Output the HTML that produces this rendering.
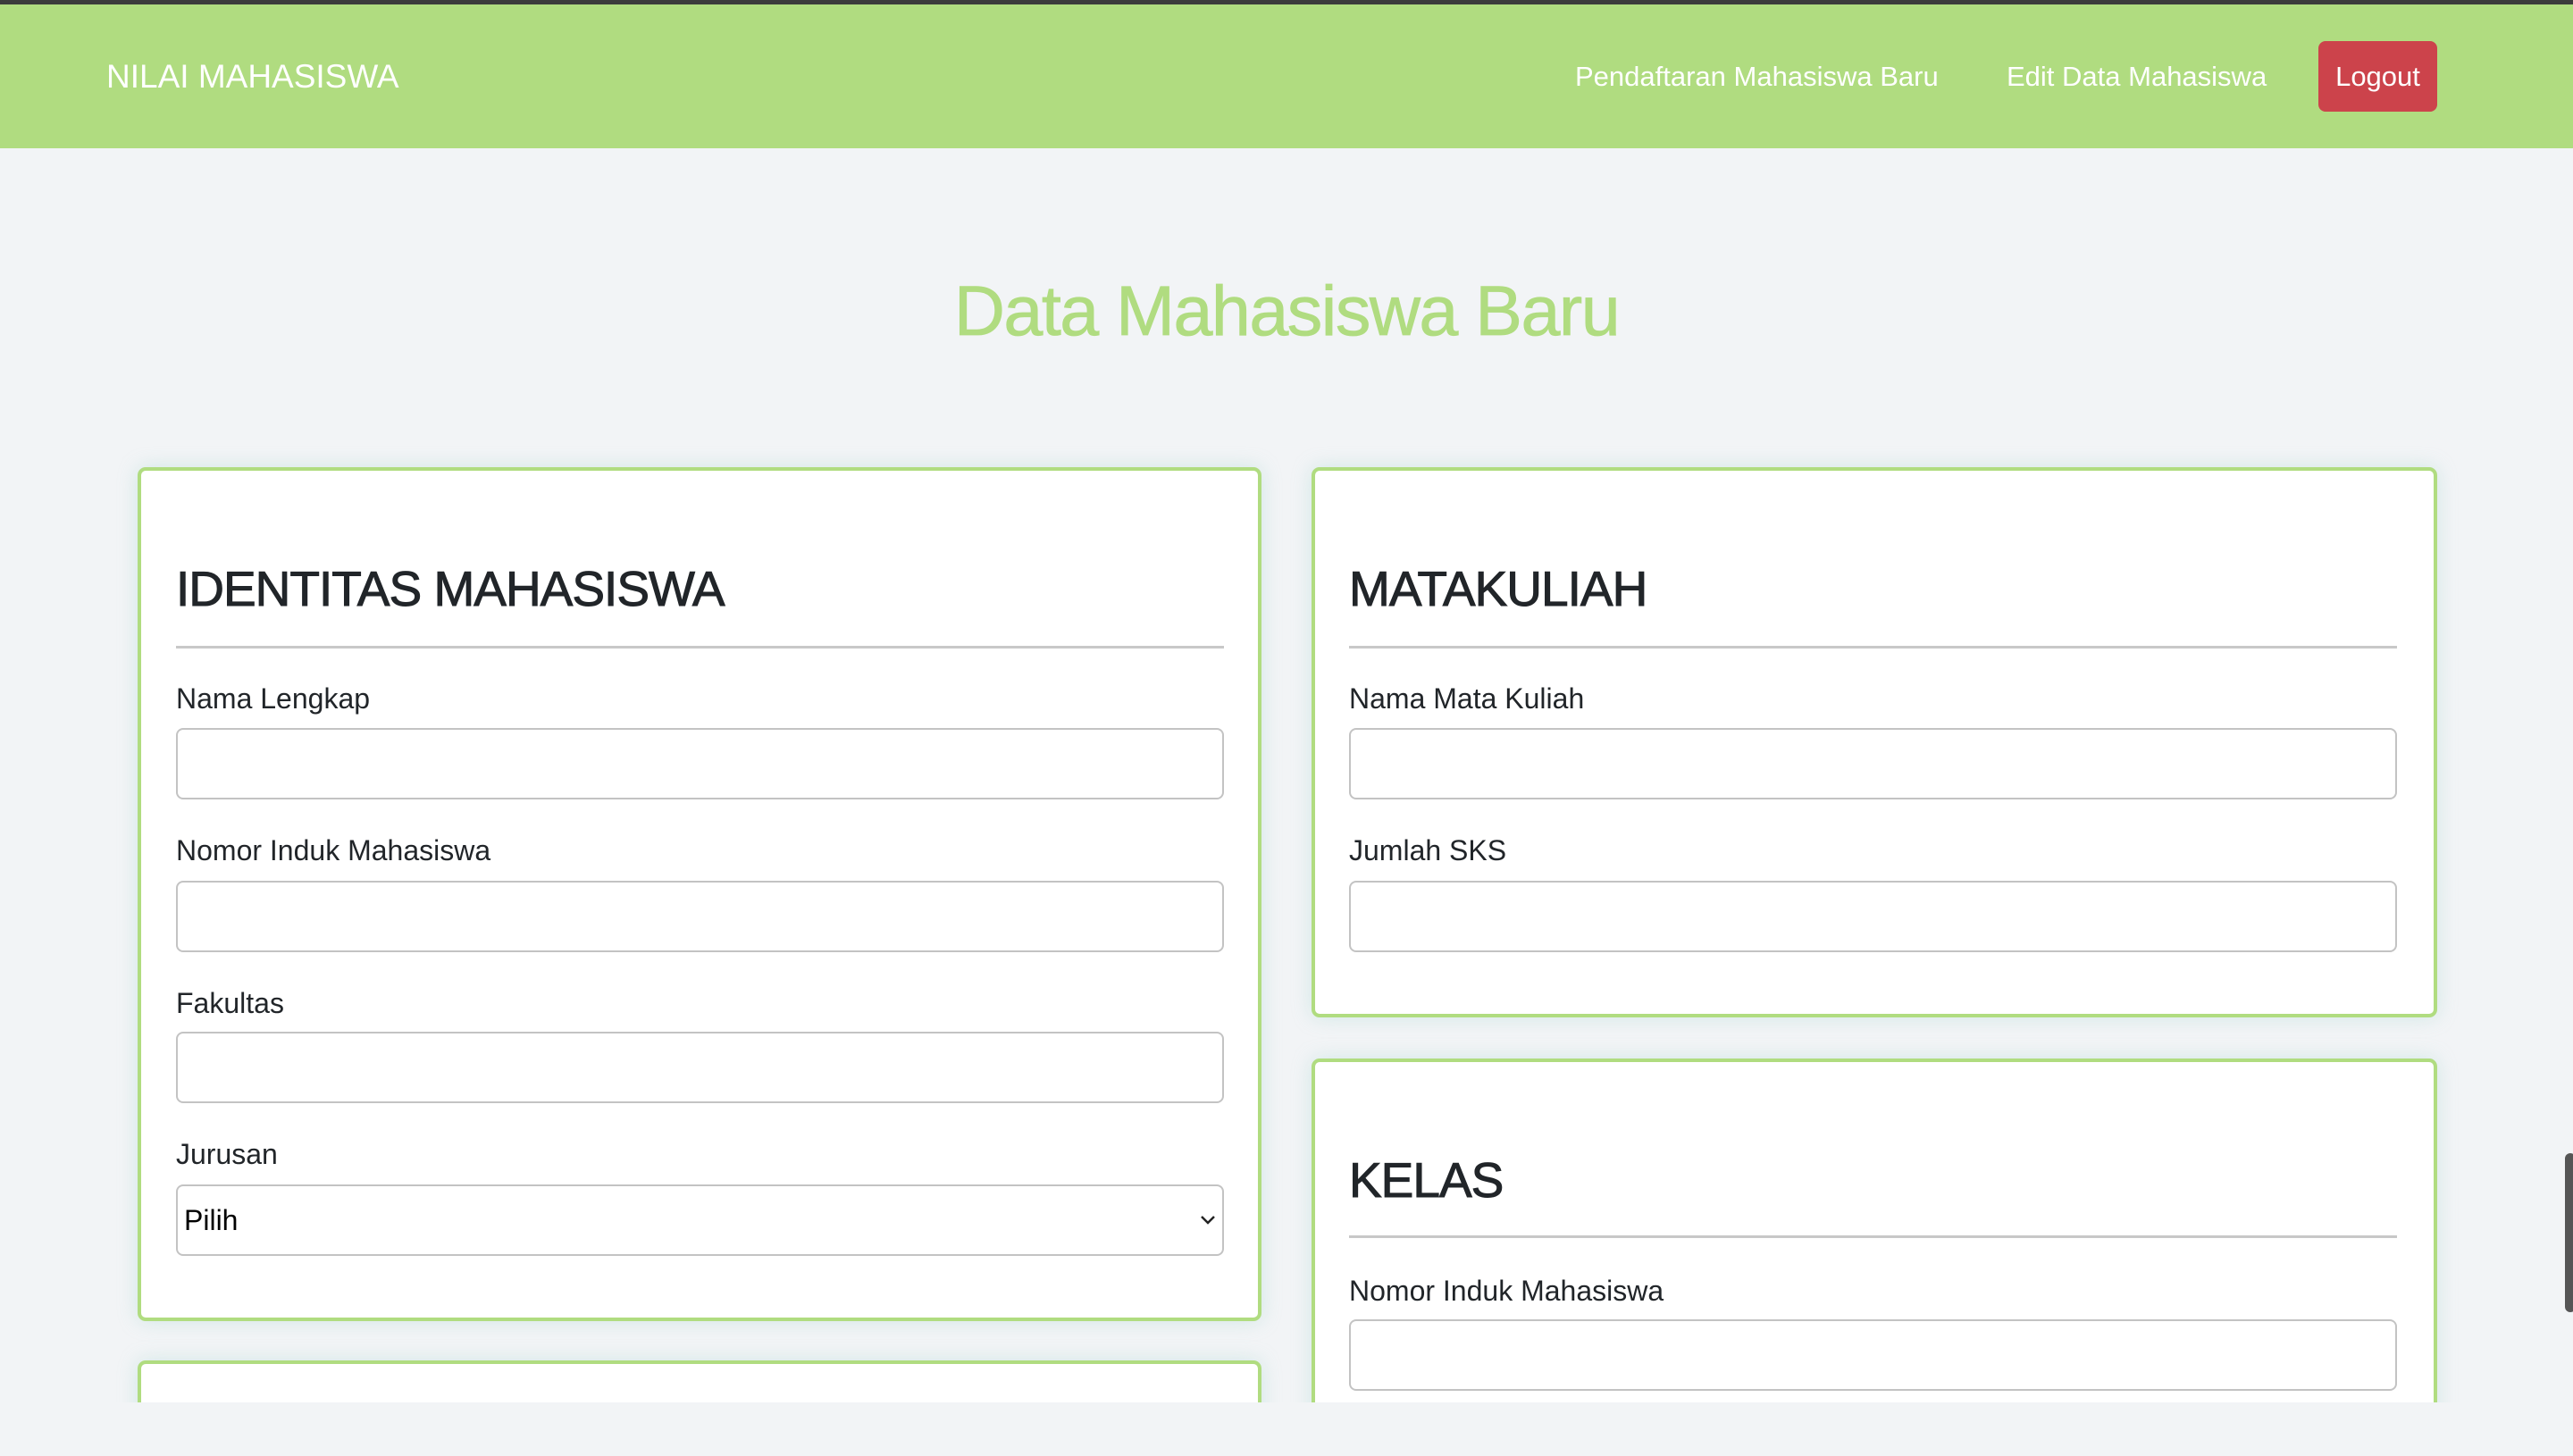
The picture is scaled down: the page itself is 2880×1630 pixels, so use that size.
<!DOCTYPE html>
<html><head><style>
*{box-sizing:border-box;margin:0;padding:0}
html,body{width:2880px;height:1630px;overflow:hidden}
body{background:#f2f4f6;font-family:"Liberation Sans",sans-serif;position:relative;color:#212529}
.a{position:absolute;white-space:nowrap}
.top{left:0;top:0;width:2880px;height:5px;background:#3c3c3c}
.nav{left:0;top:5px;width:2880px;height:161px;background:#b0dc80}
.nl{color:#fff;font-size:31px;top:68px}
.logout{left:2595px;top:46px;width:133px;height:79px;background:#cc434b;border-radius:8px;color:#fff;font-size:31px;line-height:79px;text-align:center}
.title{left:0;width:2880px;text-align:center;top:302px;font-size:79px;letter-spacing:-1.5px;color:#b0dc80;-webkit-text-stroke:0.8px #b0dc80}
.clip{left:0;top:0;width:2880px;height:1570px;overflow:hidden}
.card{position:absolute;background:#fff;border:4px solid #b0dc80;border-radius:9px;box-shadow:0 0 22px rgba(150,210,200,.35)}
.h{font-size:55px;color:#212529;letter-spacing:-1px;-webkit-text-stroke:1px #212529}
.hr{height:3px;background:#c8c8c8}
.lb{font-size:32px}
.in{border:2px solid #c3c3c3;border-radius:8px;height:80px;background:#fff}
.sb{left:2871px;top:1291px;width:12px;height:178px;background:#555;border-radius:6px}
</style></head><body>
<div class="a clip">
<div class="a top"></div>
<div class="a nav"></div>
<div class="a nl" style="left:119px;top:65px;font-size:37px">NILAI MAHASISWA</div>
<div class="a nl" style="left:1763px">Pendaftaran Mahasiswa Baru</div>
<div class="a nl" style="left:2246px">Edit Data Mahasiswa</div>
<div class="a logout">Logout</div>
<div class="a title">Data Mahasiswa Baru</div>

<div class="card" style="left:154px;top:523px;width:1258px;height:956px"></div>
<div class="card" style="left:1468px;top:523px;width:1260px;height:616px"></div>
<div class="card" style="left:1468px;top:1185px;width:1260px;height:600px"></div>
<div class="card" style="left:154px;top:1523px;width:1258px;height:300px"></div>

<div class="a h" style="left:197px;top:627px">IDENTITAS MAHASISWA</div>
<div class="a hr" style="left:197px;top:723px;width:1173px"></div>
<div class="a lb" style="left:197px;top:764px">Nama Lengkap</div>
<div class="a in" style="left:197px;top:815px;width:1173px"></div>
<div class="a lb" style="left:197px;top:934px">Nomor Induk Mahasiswa</div>
<div class="a in" style="left:197px;top:986px;width:1173px"></div>
<div class="a lb" style="left:197px;top:1105px">Fakultas</div>
<div class="a in" style="left:197px;top:1155px;width:1173px"></div>
<div class="a lb" style="left:197px;top:1274px">Jurusan</div>
<div class="a in" style="left:197px;top:1326px;width:1173px"></div>
<div class="a lb" style="left:206px;top:1348px;color:#000">Pilih</div>
<svg class="a" style="left:1343px;top:1358px" width="18" height="14" viewBox="0 0 18 14"><path d="M2 4l7 7 7-7" fill="none" stroke="#222" stroke-width="2.5"/></svg>

<div class="a h" style="left:1510px;top:627px">MATAKULIAH</div>
<div class="a hr" style="left:1510px;top:723px;width:1173px"></div>
<div class="a lb" style="left:1510px;top:764px">Nama Mata Kuliah</div>
<div class="a in" style="left:1510px;top:815px;width:1173px"></div>
<div class="a lb" style="left:1510px;top:934px">Jumlah SKS</div>
<div class="a in" style="left:1510px;top:986px;width:1173px"></div>

<div class="a h" style="left:1510px;top:1289px">KELAS</div>
<div class="a hr" style="left:1510px;top:1383px;width:1173px"></div>
<div class="a lb" style="left:1510px;top:1427px">Nomor Induk Mahasiswa</div>
<div class="a in" style="left:1510px;top:1477px;width:1173px"></div>
</div>
<div class="a sb"></div>
</body></html>
